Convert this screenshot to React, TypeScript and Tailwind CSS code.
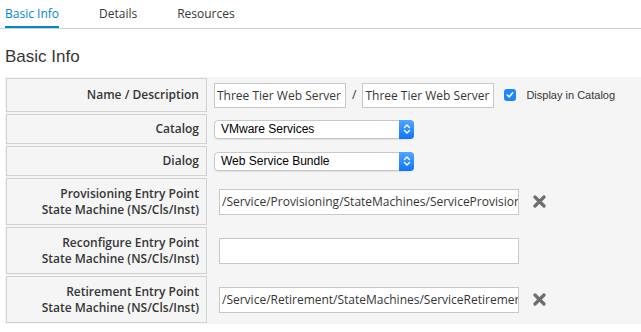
import React from "react";

const labelFont = { fontFamily: '"Open Sans", sans-serif' };

const Row = ({
  label,
  h,
  children,
}: {
  label: React.ReactNode;
  h: string;
  children?: React.ReactNode;
}) => (
  <div className={`flex ${h}`}>
    <div
      className="w-[201px] shrink-0 border border-[#d1d1d1] bg-[#f5f5f5] flex items-center justify-end pr-[7px] text-right text-[12px] leading-[16px] font-semibold text-[#363636]"
      style={labelFont}
    >
      {label}
    </div>
    <div className="flex flex-1 items-center">{children}</div>
  </div>
);

const Select = ({ value }: { value: string }) => (
  <div className="ml-[7px] flex h-[19px] w-[200px] items-stretch rounded-[4px] border border-[#c8c8c8] bg-white shadow-[0_1px_1px_rgba(0,0,0,0.08)]">
    <div
      className="flex flex-1 items-center pl-[6px] text-[12px] text-black"
      style={{ fontFamily: '"Liberation Sans", Arial, sans-serif' }}
    >
      {value}
    </div>
    <div className="-my-px -mr-px flex w-[15px] items-center justify-center rounded-r-[4px] bg-gradient-to-b from-[#4da6ff] to-[#0a74ff]">
      <svg width="8" height="12" viewBox="0 0 8 12" fill="none" stroke="white" strokeWidth="1.4" strokeLinecap="round" strokeLinejoin="round">
        <path d="M1.5 4.5 4 2l2.5 2.5" />
        <path d="M1.5 7.5 4 10l2.5-2.5" />
      </svg>
    </div>
  </div>
);

const PathInput = ({ value }: { value: string }) => (
  <div
    className="ml-[12px] flex h-[26px] w-[300px] items-center overflow-hidden whitespace-nowrap border border-[#c8c8c8] bg-white pl-[2px] text-[12px] text-[#363636]"
    style={labelFont}
  >
    {value}
  </div>
);

const Remove = () => (
  <svg className="ml-[14px]" width="13" height="13" viewBox="0 0 13 13" stroke="#6e6e6e" strokeWidth="3.2" strokeLinecap="round">
    <path d="M2 2l9 9M11 2l-9 9" />
  </svg>
);

export default function App() {
  return (
    <div className="h-[332px] w-[641px] overflow-hidden bg-white">
      <div className="flex h-[29px] border-b border-[#d1d1d1] text-[12px]" style={labelFont}>
        <div className="ml-[5px] border-b-2 border-[#0088ce] pt-[5px] text-[#0088ce]">Basic Info</div>
        <div className="ml-[40px] pt-[5px] text-[#363636]">Details</div>
        <div className="ml-[40px] pt-[5px] text-[#363636]">Resources</div>
      </div>

      <h2
        className="ml-[5px] mt-[18px] text-[17px] leading-[20px] text-[#363636]"
        style={{ fontFamily: '"Liberation Sans", Arial, sans-serif' }}
      >
        Basic Info
      </h2>

      <div className="ml-[5px] mt-[10px] flex flex-col gap-[2px] bg-[#f5f5f5] py-[1px] pl-[1px]">
        <Row label="Name / Description" h="h-[34px]">
          <input
            readOnly
            value="Three Tier Web Server"
            className="ml-[7px] h-[25px] w-[132px] border border-[#c8c8c8] bg-white pl-[2px] text-[12px] text-[#363636] outline-none"
            style={labelFont}
          />
          <span className="mx-[6px] text-[12px] text-[#363636]" style={labelFont}>
            /
          </span>
          <input
            readOnly
            value="Three Tier Web Server"
            className="h-[25px] w-[132px] border border-[#c8c8c8] bg-white pl-[2px] text-[12px] text-[#363636] outline-none"
            style={labelFont}
          />
          <span className="ml-[10px] flex h-[12px] w-[12px] items-center justify-center rounded-[3px] bg-[#1a87ff]">
            <svg width="8" height="8" viewBox="0 0 8 8" fill="none" stroke="white" strokeWidth="1.6" strokeLinecap="round" strokeLinejoin="round">
              <path d="M1.3 4.2 3.2 6 6.7 1.8" />
            </svg>
          </span>
          <span
            className="ml-[10px] text-[11px] text-[#363636]"
            style={{ fontFamily: '"Liberation Sans", Arial, sans-serif' }}
          >
            Display in Catalog
          </span>
        </Row>
        <Row label="Catalog" h="h-[30px]">
          <Select value="VMware Services" />
        </Row>
        <Row label="Dialog" h="h-[30px]">
          <Select value="Web Service Bundle" />
        </Row>
        <Row
          label={
            <span>
              Provisioning Entry Point
              <br />
              State Machine (NS/Cls/Inst)
            </span>
          }
          h="h-[47px]"
        >
          <PathInput value="/Service/Provisioning/StateMachines/ServiceProvisioning_Template" />
          <Remove />
        </Row>
        <Row
          label={
            <span>
              Reconfigure Entry Point
              <br />
              State Machine (NS/Cls/Inst)
            </span>
          }
          h="h-[47px]"
        >
          <PathInput value="" />
        </Row>
        <Row
          label={
            <span>
              Retirement Entry Point
              <br />
              State Machine (NS/Cls/Inst)
            </span>
          }
          h="h-[47px]"
        >
          <PathInput value="/Service/Retirement/StateMachines/ServiceRetirement/Default" />
          <Remove />
        </Row>
      </div>
    </div>
  );
}
